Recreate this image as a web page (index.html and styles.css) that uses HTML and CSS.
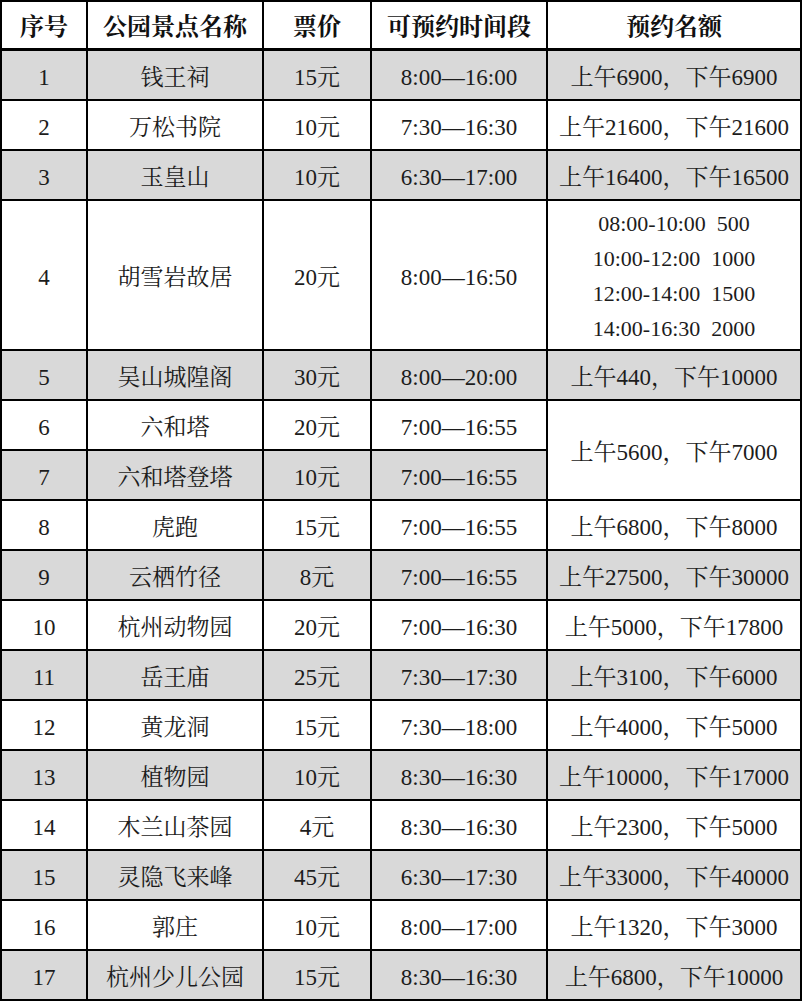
FILE: index.html
```html
<!DOCTYPE html>
<html lang="zh-CN">
<head>
<meta charset="utf-8">
<title>杭州公园景点预约</title>
<link rel="stylesheet" href="styles.css">
</head>
<body>
<div class="table">
  <div class="c hd">序号</div><div class="c hd">公园景点名称</div><div class="c hd">票价</div><div class="c hd">可预约时间段</div><div class="c hd">预约名额</div>

  <div class="c g">1</div><div class="c g">钱王祠</div><div class="c g">15元</div><div class="c g">8:00—16:00</div><div class="c g">上午6900，下午6900</div>
  <div class="c">2</div><div class="c">万松书院</div><div class="c">10元</div><div class="c">7:30—16:30</div><div class="c">上午21600，下午21600</div>
  <div class="c g">3</div><div class="c g">玉皇山</div><div class="c g">10元</div><div class="c g">6:30—17:00</div><div class="c g">上午16400，下午16500</div>
  <div class="c tall">4</div><div class="c tall">胡雪岩故居</div><div class="c tall">20元</div><div class="c tall">8:00—16:50</div>
  <div class="c tall multi"><span class="ln">08:00-10:00  500</span><span class="ln">10:00-12:00  1000</span><span class="ln">12:00-14:00  1500</span><span class="ln">14:00-16:30  2000</span></div>
  <div class="c g">5</div><div class="c g">吴山城隍阁</div><div class="c g">30元</div><div class="c g">8:00—20:00</div><div class="c g">上午440，下午10000</div>
  <div class="c">6</div><div class="c">六和塔</div><div class="c">20元</div><div class="c">7:00—16:55</div><div class="c span2">上午5600，下午7000</div>
  <div class="c g">7</div><div class="c g">六和塔登塔</div><div class="c g">10元</div><div class="c g">7:00—16:55</div>
  <div class="c">8</div><div class="c">虎跑</div><div class="c">15元</div><div class="c">7:00—16:55</div><div class="c">上午6800，下午8000</div>
  <div class="c g">9</div><div class="c g">云栖竹径</div><div class="c g">8元</div><div class="c g">7:00—16:55</div><div class="c g">上午27500，下午30000</div>
  <div class="c">10</div><div class="c">杭州动物园</div><div class="c">20元</div><div class="c">7:00—16:30</div><div class="c">上午5000，下午17800</div>
  <div class="c g">11</div><div class="c g">岳王庙</div><div class="c g">25元</div><div class="c g">7:30—17:30</div><div class="c g">上午3100，下午6000</div>
  <div class="c">12</div><div class="c">黄龙洞</div><div class="c">15元</div><div class="c">7:30—18:00</div><div class="c">上午4000，下午5000</div>
  <div class="c g">13</div><div class="c g">植物园</div><div class="c g">10元</div><div class="c g">8:30—16:30</div><div class="c g">上午10000，下午17000</div>
  <div class="c">14</div><div class="c">木兰山茶园</div><div class="c">4元</div><div class="c">8:30—16:30</div><div class="c">上午2300，下午5000</div>
  <div class="c g">15</div><div class="c g">灵隐飞来峰</div><div class="c g">45元</div><div class="c g">6:30—17:30</div><div class="c g">上午33000，下午40000</div>
  <div class="c">16</div><div class="c">郭庄</div><div class="c">10元</div><div class="c">8:00—17:00</div><div class="c">上午1320，下午3000</div>
  <div class="c g">17</div><div class="c g">杭州少儿公园</div><div class="c g">15元</div><div class="c g">8:30—16:30</div><div class="c g">上午6800，下午10000</div>
</div>
</body>
</html>
```

FILE: styles.css
```css
html, body {
  margin: 0;
  padding: 0;
  background: #ffffff;
}

body {
  font-family: "Liberation Serif", "Noto Serif CJK SC", "Noto Sans CJK SC", serif;
  color: #1c1c1c;
}

.table {
  display: grid;
  width: 802px;
  grid-template-columns: 84px 174px 106px 174px 252px;
  grid-template-rows: 47px repeat(3, 48px) 148px repeat(13, 48px);
  gap: 2px;
  padding: 2px;
  box-sizing: border-box;
  background: #000000;
}

.c {
  background: #ffffff;
  display: flex;
  align-items: center;
  justify-content: center;
  font-size: 23px;
  line-height: 1;
  padding-top: 5px;
  box-sizing: border-box;
  white-space: nowrap;
}

.g {
  background: #d9d9d9;
}

.hd {
  font-size: 24px;
  font-weight: 700;
  color: #111111;
  border-bottom: 1px solid #000000;
  padding-top: 4px;
}

.span2 {
  grid-row: span 2;
}

.multi {
  flex-direction: column;
  justify-content: center;
  gap: 13px;
  font-size: 22px;
  padding-top: 3px;
}

.ln {
  white-space: pre;
  display: block;
}
```
